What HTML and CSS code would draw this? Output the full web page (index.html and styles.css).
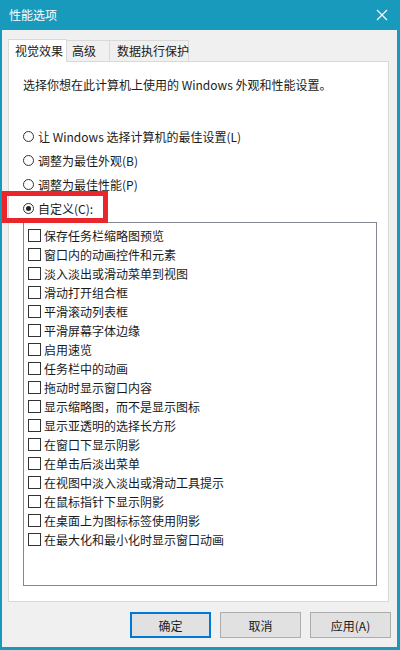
FILE: index.html
```html
<!DOCTYPE html>
<html lang="zh-CN">
<head>
<meta charset="utf-8">
<title>性能选项</title>
<link rel="stylesheet" href="styles.css">
</head>
<body>
<div class="window">
  <div class="titlebar">
    <span class="title">性能选项</span>
    <svg class="close" width="12" height="12" viewBox="0 0 12 12"><path d="M1 1L11 11M11 1L1 11" stroke="#ffffff" stroke-width="1.2" fill="none"/></svg>
  </div>
  <div class="client">
    <div class="tabs">
      <div class="tab active">视觉效果</div>
      <div class="tab t2">高级</div>
      <div class="tab t3">数据执行保护</div>
    </div>
    <div class="panel">
      <p class="intro">选择你想在此计算机上使用的 Windows 外观和性能设置。</p>
      <div class="radios">
        <div class="radio"><span class="dot"></span>让 Windows 选择计算机的最佳设置(L)</div>
        <div class="radio"><span class="dot"></span>调整为最佳外观(B)</div>
        <div class="radio"><span class="dot"></span>调整为最佳性能(P)</div>
        <div class="radio checked"><span class="dot"></span>自定义(C):</div>
      </div>
      <div class="listbox">
        <div class="item"><span class="box"></span>保存任务栏缩略图预览</div>
        <div class="item"><span class="box"></span>窗口内的动画控件和元素</div>
        <div class="item"><span class="box"></span>淡入淡出或滑动菜单到视图</div>
        <div class="item"><span class="box"></span>滑动打开组合框</div>
        <div class="item"><span class="box"></span>平滑滚动列表框</div>
        <div class="item"><span class="box"></span>平滑屏幕字体边缘</div>
        <div class="item"><span class="box"></span>启用速览</div>
        <div class="item"><span class="box"></span>任务栏中的动画</div>
        <div class="item"><span class="box"></span>拖动时显示窗口内容</div>
        <div class="item"><span class="box"></span>显示缩略图，而不是显示图标</div>
        <div class="item"><span class="box"></span>显示亚透明的选择长方形</div>
        <div class="item"><span class="box"></span>在窗口下显示阴影</div>
        <div class="item"><span class="box"></span>在单击后淡出菜单</div>
        <div class="item"><span class="box"></span>在视图中淡入淡出或滑动工具提示</div>
        <div class="item"><span class="box"></span>在鼠标指针下显示阴影</div>
        <div class="item"><span class="box"></span>在桌面上为图标标签使用阴影</div>
        <div class="item"><span class="box"></span>在最大化和最小化时显示窗口动画</div>
      </div>
    </div>
    <div class="buttons">
      <div class="btn default">确定</div>
      <div class="btn">取消</div>
      <div class="btn">应用(A)</div>
    </div>
  </div>
  <div class="highlight"></div>
</div>
</body>
</html>
```
FILE: styles.css
```css
html, body {
  margin: 0;
  padding: 0;
}
body {
  font-family: "Noto Sans CJK SC", "Noto Sans", sans-serif;
  font-size: 12px;
  color: #1a1a1a;
}
.window {
  position: relative;
  width: 400px;
  height: 650px;
  box-sizing: border-box;
  background: #189abd;
  padding: 0 3px 3px 2px;
  display: flex;
  flex-direction: column;
}
.titlebar {
  height: 30px;
  display: flex;
  align-items: center;
  justify-content: space-between;
  padding: 0 9px 0 7px;
  color: #ffffff;
  flex: none;
}
.title {
  font-size: 12px;
  line-height: 16px;
}
.client {
  flex: 1;
  background: #f0f0f0;
  padding: 9px 6px 0 6px;
  display: flex;
  flex-direction: column;
}
.tabs {
  display: flex;
  align-items: flex-end;
  height: 23px;
  position: relative;
  z-index: 1;
  margin-bottom: -1px;
}
.tab {
  height: 21px;
  box-sizing: border-box;
  border: 1px solid #d9d9d9;
  border-left: none;
  border-bottom: none;
  background: #f0f0f0;
  line-height: 20px;
  white-space: nowrap;
  margin-bottom: 1px;
}
.tab.active {
  width: 59px;
  height: 23px;
  background: #ffffff;
  border-left: 1px solid #d9d9d9;
  margin-bottom: 0;
  padding-left: 6px;
  line-height: 21px;
}
.tab.t2 {
  width: 43px;
  padding-left: 5px;
}
.tab.t3 {
  width: 79px;
  padding-left: 7px;
}
.panel {
  width: 381px;
  height: 541px;
  box-sizing: border-box;
  border: 1px solid #d9d9d9;
  background: #ffffff;
  padding: 15px 0 0 14px;
}
.intro {
  margin: 0;
  line-height: 16px;
}
.radios {
  margin-top: 31px;
}
.radio {
  height: 24px;
  display: flex;
  align-items: center;
}
.dot {
  width: 11px;
  height: 11px;
  box-sizing: border-box;
  border: 1px solid #333;
  border-radius: 50%;
  margin-right: 4px;
  display: flex;
  align-items: center;
  justify-content: center;
}
.radio.checked .dot::after {
  content: "";
  width: 5px;
  height: 5px;
  border-radius: 50%;
  background: #222;
}
.listbox {
  margin-top: 2px;
  width: 354px;
  height: 364px;
  box-sizing: border-box;
  border: 1px solid #828790;
  padding: 3px 0 0 4px;
}
.item {
  height: 19px;
  display: flex;
  align-items: center;
}
.box {
  width: 13px;
  height: 13px;
  box-sizing: border-box;
  border: 1px solid #333;
  margin-right: 3px;
}
.buttons {
  display: flex;
  justify-content: flex-end;
  gap: 9px;
  margin-top: 10px;
}
.btn {
  width: 81px;
  height: 26px;
  box-sizing: border-box;
  border: 1px solid #adadad;
  background: #e1e1e1;
  display: flex;
  align-items: center;
  justify-content: center;
}
.btn.default {
  border: 1px solid #0078d7;
  box-shadow: inset 0 0 0 1px #0078d7;
}
.highlight {
  position: absolute;
  left: 2px;
  top: 191px;
  width: 106px;
  height: 32px;
  box-sizing: border-box;
  border: 5px solid #e8262b;
}
```
